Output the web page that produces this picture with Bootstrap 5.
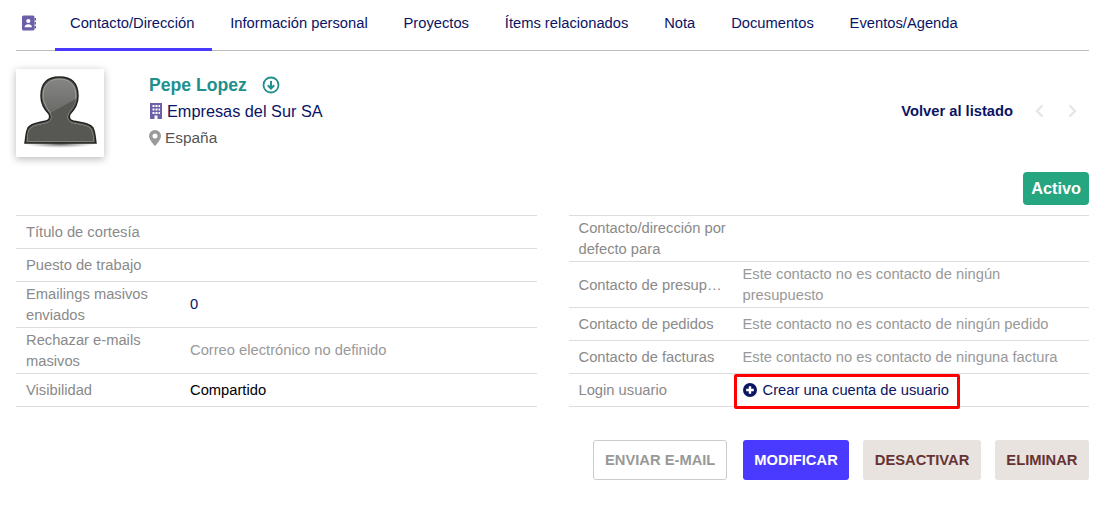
<!DOCTYPE html>
<html lang="es">
<head>
<meta charset="utf-8">
<title>Contacto</title>
<link href="https://cdn.jsdelivr.net/npm/bootstrap@5.3.0/dist/css/bootstrap.min.css" rel="stylesheet">
<style>
body{font-family:"Liberation Sans",Arial,sans-serif;font-size:14.72px;color:rgb(10,20,100);background:#fff;overflow:hidden}
.page-wrap{padding:0 28px 0 16px}
.tabbar{height:51px;border-bottom:1px solid #bbb;margin:0}
.tab-icon{width:39px;padding-left:6px;display:flex;align-items:center;height:46px}
.tab-link{display:flex;align-items:center;height:50px;padding:0 18px 0 15px;margin-right:2.85px;color:rgb(10,20,100);text-decoration:none;font-size:14.72px;border-bottom:3px solid transparent}
.tab-link.on{border-bottom-color:#4a3aff;height:51px;padding-bottom:1px}
.head-row{margin-top:18px;height:88px}
.avatar-box{width:88px;height:88px;background:#fff;box-shadow:0 2px 8px rgba(0,0,0,.28)}
.head-text{margin-left:45px;padding-top:4px}
.who{font-size:17.6px;font-weight:700;color:#20908c;line-height:24px;display:flex;align-items:center}
.who svg{margin-left:15px}
.firm{font-size:16.3px;line-height:28px;display:flex;align-items:center;gap:4px}
.place{font-size:15.4px;line-height:24px;color:#555;margin-top:1px;display:flex;align-items:center;gap:4px}
.back-nav{font-weight:700;font-size:14.72px;color:rgb(10,20,100);margin-top:31px;padding-right:12px}
.back-nav span{margin-right:22px}
.back-nav svg+svg{margin-left:24px}
.state-row{margin-top:15px;height:33px}
.state-pill{background:#25a580;color:#fff;font-size:16.3px;font-weight:700;border-radius:4px;padding:0 8px;line-height:33px;height:33px}
.tables-row{margin-top:10px;gap:32px}
.tables-row>div{flex:1 1 0;min-width:0}
.facts{width:100%;table-layout:fixed;border-collapse:collapse;border-top:1px solid #ddd;margin:0}
.facts td{border-bottom:1px solid #ddd;padding:5.5px 10px;line-height:21px;font-size:14.72px;vertical-align:middle}
.facts td.lab{width:164px;color:#8a8a8a}
.facts td.lab-wide{padding-right:4px}
.facts td.val-grey{color:#999}
.facts td.val-black{color:#000}
.facts td.val-navy{color:rgb(10,20,100)}
.facts tr.tight td{padding-top:1.5px;padding-bottom:1.5px}
.nudge-down{padding-top:2px}
.login-cell{position:relative}
.red-box{position:absolute;left:1px;top:0;width:226px;height:35px;border:3px solid #f00;border-radius:2px;pointer-events:none}
.login-link{color:rgb(10,20,100);text-decoration:none;display:flex;align-items:center;gap:6px;white-space:nowrap;height:21px}
.action-row{margin-top:33px;gap:14px}
.act{height:40px;border-radius:3px;font-size:14.72px;font-weight:700;padding:0 10.5px;display:flex;align-items:center;border:1px solid transparent;text-transform:uppercase;line-height:1}
.act-mail{border-color:#ccc;color:#999;background:#fff;margin-right:2px}
.act-mod{background:#4a3aff;color:#fff}
.act-grey{background:#e8e3df;color:#633}
</style>
</head>
<body>
<div class="page-wrap">
  <nav class="tabbar d-flex align-items-start">
    <div class="tab-icon">
      <svg width="14" height="16" viewBox="0 0 14 16"><rect x="0" y="0.5" width="12.5" height="15" rx="1.5" fill="#6a5fa8"/><rect x="12.5" y="3" width="1.5" height="2.5" fill="#6a5fa8"/><rect x="12.5" y="7" width="1.5" height="2.5" fill="#6a5fa8"/><rect x="12.5" y="11" width="1.5" height="2.5" fill="#6a5fa8"/><circle cx="6.3" cy="6" r="2.1" fill="#fff"/><path d="M2.6 12.3c0-2 1.6-3 3.7-3s3.7 1 3.7 3z" fill="#fff"/></svg>
    </div>
    <a class="tab-link on" href="#">Contacto/Dirección</a>
    <a class="tab-link" href="#">Información personal</a>
    <a class="tab-link" href="#">Proyectos</a>
    <a class="tab-link" href="#">Ítems relacionados</a>
    <a class="tab-link" href="#">Nota</a>
    <a class="tab-link" href="#">Documentos</a>
    <a class="tab-link" href="#">Eventos/Agenda</a>
  </nav>

  <div class="head-row d-flex align-items-start">
    <div class="avatar-box">
      <svg width="88" height="88" viewBox="0 0 88 88" class="d-block">
        <defs>
          <linearGradient id="gHead" x1="0" y1="0" x2="0" y2="1"><stop offset="0" stop-color="#858583"/><stop offset="1" stop-color="#535350"/></linearGradient>
          <radialGradient id="gFloor"><stop offset="0" stop-color="#444" stop-opacity=".85"/><stop offset="1" stop-color="#888" stop-opacity="0"/></radialGradient>
        </defs>
        <ellipse cx="44" cy="75" rx="36" ry="4" fill="url(#gFloor)"/>
        <path d="M25 27C25 14 32 8 43.500 8S62 14 62 27C62 34 58 41 54 45C52 49 54 51 57 52C65 54 74 54 77 59C79 63 79 68 80 74H9C10 68 10 63 12 59C15 54 23 54 30 52C33 51 35 49 33 45C29 41 25 34 25 27Z" fill="#565652" stroke="#232321" stroke-width="1.500"/>
        <path d="M27 27C27 16 33 10 43.500 10S60 16 60 27C60 33 56 40 52.500 44C50 49 52 52 56 54C64 56 72 56 75 60C76 62 77 66 77.500 72H11.500C12 66 12 62 14 60C17 56 24 56 31 54C35 52 37 49 34.500 44C31 40 27 33 27 27Z" fill="url(#gHead)" stroke="#a5a5a2" stroke-width="1"/>
        <path d="M34.500 44L60 30C59 35 55.500 41 52.500 44C50 49 52 52 56 54C64 56 72 56 75 60C76 62 77 66 77.500 72H11.500C12 66 12 62 14 60C17 56 24 56 31 54C35 52 37 49 34.500 44Z" fill="#575753"/>
      </svg>
    </div>
    <div class="head-text flex-grow-1">
      <div class="who">Pepe Lopez
        <svg width="18" height="18" viewBox="0 0 18 18"><circle cx="9" cy="9" r="7.500" fill="none" stroke="#20908c" stroke-width="1.800"/><path d="M9 5v7M5.800 9.200L9 12.500l3.200-3.300" fill="none" stroke="#20908c" stroke-width="2"/></svg>
      </div>
      <div class="firm">
        <svg width="14" height="16" viewBox="0 0 14 16"><rect x="1" y="0" width="12" height="16" fill="#6a5fa8"/><g fill="#fff"><rect x="3.500" y="2" width="2" height="2"/><rect x="6.500" y="2" width="2" height="2"/><rect x="9.500" y="2" width="1.500" height="2"/><rect x="3.500" y="5.500" width="2" height="2"/><rect x="6.500" y="5.500" width="2" height="2"/><rect x="9.500" y="5.500" width="1.500" height="2"/><rect x="3.500" y="9" width="2" height="2"/><rect x="6.500" y="9" width="2" height="2"/><rect x="9.500" y="9" width="1.500" height="2"/><rect x="5.500" y="12.500" width="3" height="3.500"/></g></svg>
        Empresas del Sur SA
      </div>
      <div class="place">
        <svg width="12" height="16" viewBox="0 0 12 16"><path fill-rule="evenodd" d="M6 0a6 6 0 0 1 6 6C12 10 6 16 6 16S0 10 0 6A6 6 0 0 1 6 0zm0 3.500a2.500 2.500 0 1 0 0 5 2.500 2.500 0 0 0 0-5z" fill="#9a9a9a"/></svg>
        España
      </div>
    </div>
    <div class="back-nav d-flex align-items-center">
      <span>Volver al listado</span>
      <svg width="9" height="14" viewBox="0 0 9 14"><path d="M7.500 1.500L2 7l5.500 5.500" fill="none" stroke="#e6e6e6" stroke-width="2.400"/></svg>
      <svg width="9" height="14" viewBox="0 0 9 14"><path d="M1.500 1.500L7 7l-5.500 5.500" fill="none" stroke="#e6e6e6" stroke-width="2.400"/></svg>
    </div>
  </div>

  <div class="state-row d-flex justify-content-end"><span class="state-pill">Activo</span></div>

  <div class="tables-row d-flex">
    <div>
      <table class="facts">
        <tr><td class="lab">Título de cortesía</td><td></td></tr>
        <tr><td class="lab">Puesto de trabajo</td><td></td></tr>
        <tr class="tight"><td class="lab">Emailings masivos enviados</td><td class="val-navy">0</td></tr>
        <tr class="tight"><td class="lab">Rechazar e-mails masivos</td><td class="val-grey">Correo electrónico no definido</td></tr>
        <tr><td class="lab">Visibilidad</td><td class="val-black">Compartido</td></tr>
      </table>
    </div>
    <div>
      <table class="facts">
        <tr class="tight"><td class="lab lab-wide">Contacto/dirección por defecto para</td><td></td></tr>
        <tr class="tight"><td class="lab"><div class="text-truncate nudge-down">Contacto de presupuestos</div></td><td class="val-grey">Este contacto no es contacto de ningún presupuesto</td></tr>
        <tr><td class="lab">Contacto de pedidos</td><td class="val-grey">Este contacto no es contacto de ningún pedido</td></tr>
        <tr><td class="lab">Contacto de facturas</td><td class="val-grey">Este contacto no es contacto de ninguna factura</td></tr>
        <tr><td class="lab">Login usuario</td><td class="login-cell">
          <a class="login-link" href="#">
            <svg width="14" height="14" viewBox="0 0 14 14"><circle cx="7" cy="7" r="7" fill="rgb(10,20,100)"/><path d="M7 3.200v7.600M3.200 7h7.600" stroke="#fff" stroke-width="2.400"/></svg>
            Crear una cuenta de usuario</a>
          <div class="red-box"></div>
        </td></tr>
      </table>
    </div>
  </div>

  <div class="action-row d-flex justify-content-end">
    <div class="act act-mail">Enviar e-mail</div>
    <div class="act act-mod">Modificar</div>
    <div class="act act-grey">Desactivar</div>
    <div class="act act-grey">Eliminar</div>
  </div>
</div>
<script src="https://cdn.jsdelivr.net/npm/bootstrap@5.3.0/dist/js/bootstrap.bundle.min.js"></script>
</body>
</html>
